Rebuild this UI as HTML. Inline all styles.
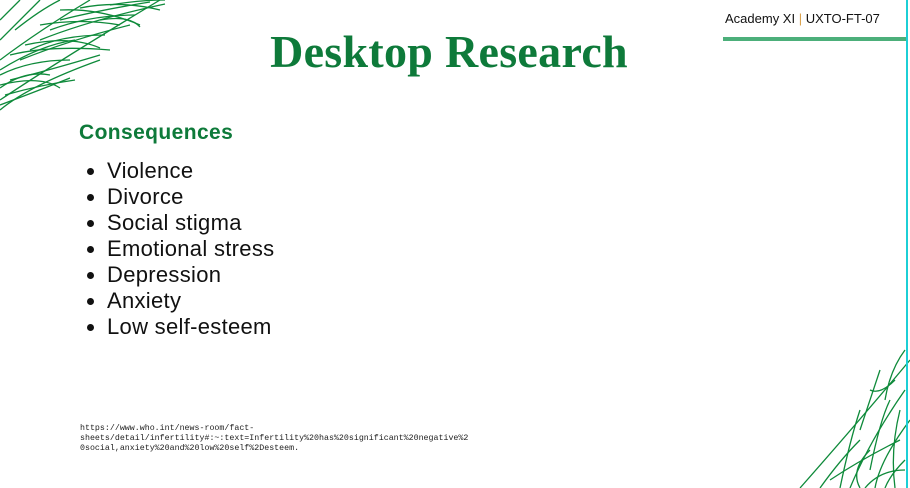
<!DOCTYPE html>
<html><head><style>
body{margin:0;width:910px;height:488px;background:#fff;position:relative;overflow:hidden;font-family:"Liberation Sans",sans-serif}
.t{position:absolute;left:0;width:898px;top:25px;text-align:center;font-family:"Liberation Serif",serif;font-weight:bold;font-size:46px;color:#0e7a3a;letter-spacing:0.3px}
.h{position:absolute;left:79px;top:121px;font-size:21px;font-weight:bold;color:#0e7a3a;letter-spacing:0.4px}
ul{position:absolute;left:80px;top:158px;margin:0;padding:0 0 0 27px;font-size:22px;line-height:26px;color:#111;letter-spacing:0.3px}
.r{position:absolute;left:80px;top:424px;font-family:"Liberation Mono",monospace;font-size:8.3px;line-height:10px;color:#222}
.a{position:absolute;left:725px;top:11px;font-size:13px;color:#111}
</style></head><body>
<svg width="910" height="488" style="position:absolute;left:0;top:0">
<g stroke="#0e8a3a" fill="none" stroke-width="1.3">
<path d="M0 100 Q60 60 160 0"/><path d="M0 60 Q40 30 90 0"/><path d="M0 110 Q30 85 100 60"/>
<path d="M10 80 Q50 70 100 55"/><path d="M20 60 Q70 40 130 25"/><path d="M40 40 Q90 20 165 4"/>
<path d="M0 75 Q30 60 70 60"/><path d="M5 95 Q40 85 75 80"/><path d="M30 50 Q60 35 105 35"/>
<path d="M50 30 Q90 15 135 15"/><path d="M0 40 Q20 20 40 0"/><path d="M0 20 L20 0"/>
<path d="M0 88 Q25 70 50 75"/><path d="M60 20 Q100 10 150 2"/>
<path d="M0 70 Q40 45 75 40"/><path d="M10 55 Q50 45 110 50"/><path d="M25 45 Q70 35 100 48"/>
<path d="M40 25 Q80 18 120 25"/><path d="M60 10 Q100 8 140 25"/><path d="M80 8 Q120 0 160 10"/>
<path d="M0 105 Q40 90 70 78"/><path d="M0 85 Q40 75 60 88"/><path d="M15 30 Q40 10 60 0"/>
<path d="M100 20 Q130 15 140 27"/><path d="M110 5 Q140 0 165 0"/>
<path d="M910 360 Q860 420 800 488"/><path d="M905 390 Q870 440 850 488"/><path d="M910 420 Q880 460 875 488"/>
<path d="M880 370 Q870 400 860 430"/><path d="M900 440 Q860 460 830 480"/><path d="M890 400 Q880 420 870 470"/>
<path d="M860 440 Q840 460 820 488"/><path d="M905 460 Q890 475 885 488"/><path d="M895 380 Q880 395 870 390"/>
<path d="M905 350 Q890 370 885 400"/><path d="M860 410 Q850 440 840 488"/><path d="M900 410 Q890 450 895 488"/>
<path d="M870 450 Q850 470 860 488"/><path d="M905 470 Q880 470 865 488"/>
</g>
<rect x="723" y="37" width="183" height="4" fill="#4caf7a"/>
<rect x="906" y="0" width="2" height="488" fill="#1ccfd6"/>
</svg>
<div class="a">Academy XI <span style="color:#d9a04a">|</span> UXTO-FT-07</div>
<div class="t">Desktop Research</div>
<div class="h">Consequences</div>
<ul><li>Violence</li><li>Divorce</li><li>Social stigma</li><li>Emotional stress</li><li>Depression</li><li>Anxiety</li><li>Low self-esteem</li></ul>
<div class="r">https://www.who.int/news-room/fact-<br>sheets/detail/infertility#:~:text=Infertility%20has%20significant%20negative%2<br>0social,anxiety%20and%20low%20self%2Desteem.</div>
</body></html>
